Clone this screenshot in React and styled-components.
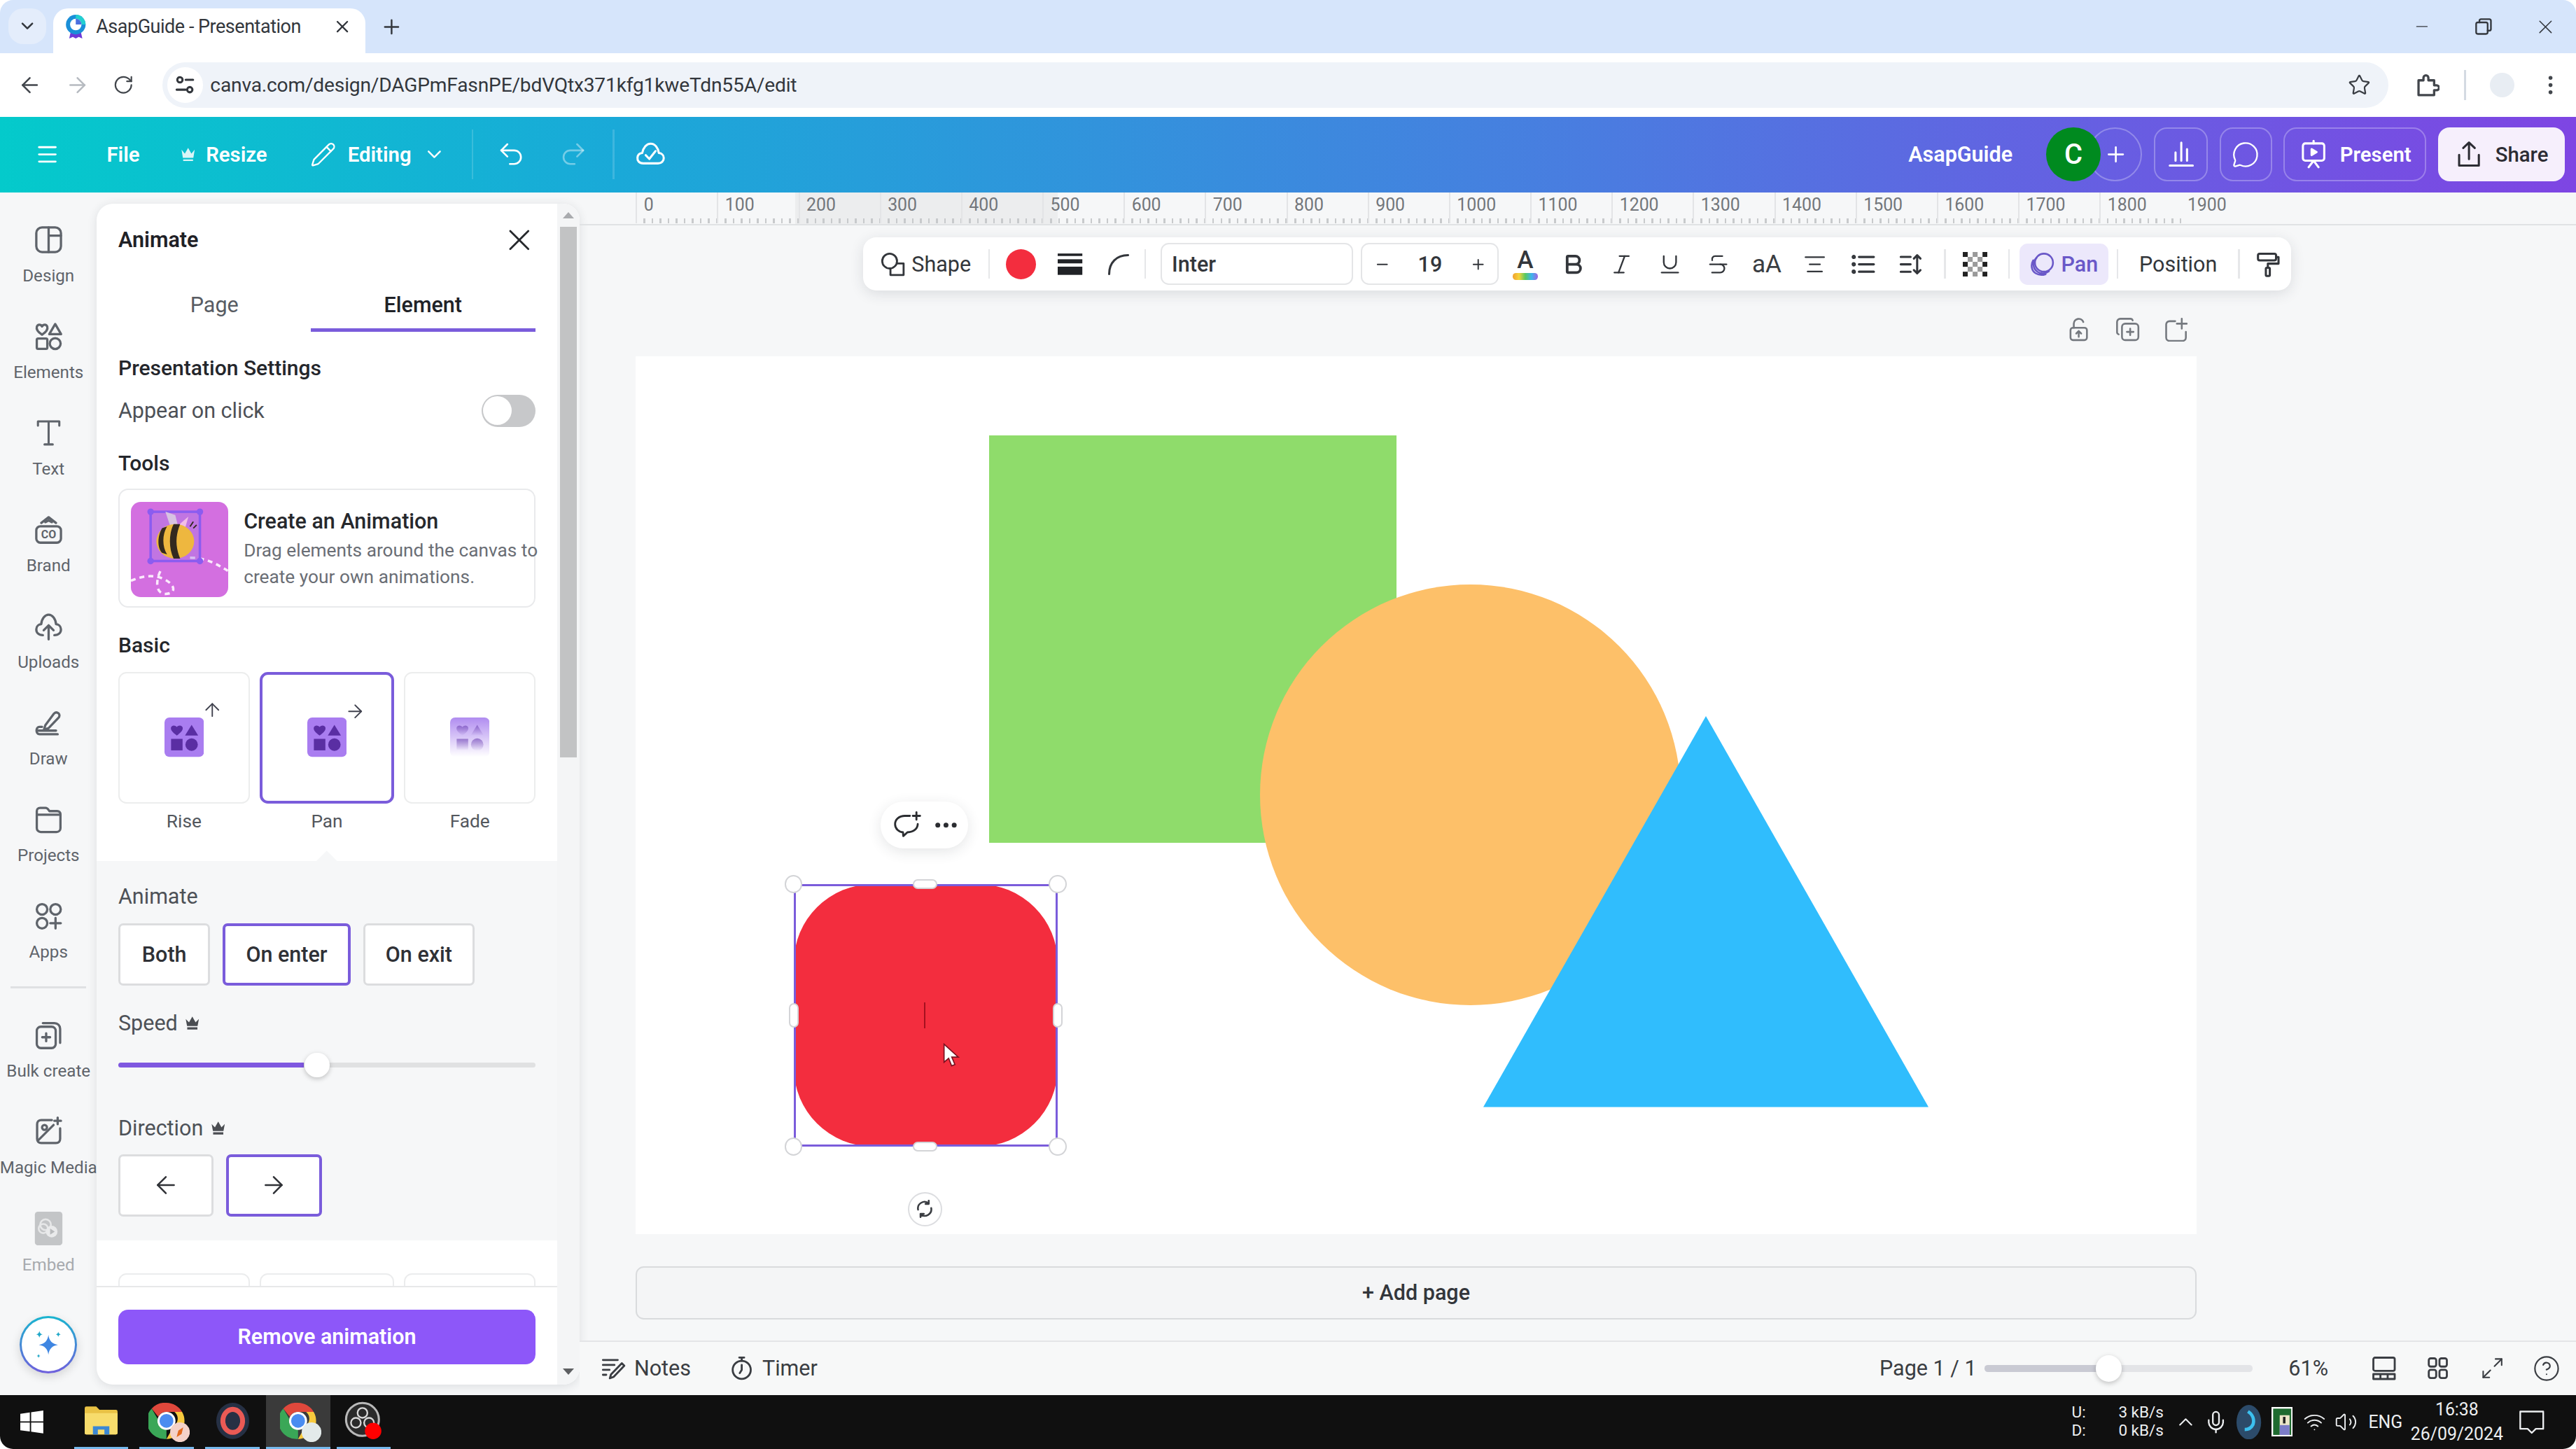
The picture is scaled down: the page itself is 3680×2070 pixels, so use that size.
import React from "react";
import styled, { createGlobalStyle, css } from "styled-components";
import {
  ChevronDown, X, Plus, ArrowLeft, ArrowRight, RotateCw, Star, MoreVertical, Menu, Pencil,
  Undo2, Redo2, MessageCircle, ArrowUp, Minus, Bold, Italic, Underline, Strikethrough,
  AlignCenter, CircleHelp, Maximize2, ChevronUp, Mic, Wifi, Volume2,
} from "lucide-react";

const UI = `Roboto, "Noto Sans", Arial, sans-serif`;
const PURPLE = "#7a5cdb";

const Global = createGlobalStyle`
  html, body { margin: 0; padding: 0; width: 3680px; height: 2070px; overflow: hidden; background: #fff; }
  #root { zoom: 2.34694; width: 1568px; height: 882px; }
  * { box-sizing: border-box; }
`;

const Window = styled.div`
  width: 1568px; height: 882px; display: flex; flex-direction: column;
  border-radius: 8px; overflow: hidden; font-family: ${UI}; color: #26282c;
`;

/* ---------- Chrome ---------- */
const TabStrip = styled.div`
  height: 32.5px; background: #d6e5fb; display: flex; align-items: flex-end; padding-left: 5px; color: #33373d;
`;
const TabSearch = styled.div`
  width: 23px; height: 22px; margin-bottom: 5.5px; border-radius: 9px; background: #e4edfb;
  display: flex; align-items: center; justify-content: center;
`;
const Tab = styled.div`
  width: 190px; height: 27.5px; margin-left: 4.5px; background: #fff; border-radius: 9px 9px 0 0;
  display: flex; align-items: center; padding: 0 8px 5px 7px; font-size: 11.5px; white-space: nowrap;
`;
const TabTitle = styled.span` margin-left: 6px; flex: 1; letter-spacing: -0.2px; `;
const NewTab = styled.div` width: 32px; height: 27.5px; padding-bottom: 5px; display: flex; align-items: center; justify-content: center; `;
const WinControls = styled.div` margin-left: auto; display: flex; align-items: center; height: 32.5px; `;
const WinBtn = styled.div` width: 37.5px; height: 32.5px; display: flex; align-items: center; justify-content: center; `;

const AddressBar = styled.div` height: 38.5px; background: #fff; display: flex; align-items: center; color: #4a4e55; `;
const NavBtn = styled.div`
  width: ${p => p.$w || 29.5}px; display: flex; align-items: center; justify-content: center;
  color: ${p => (p.$dim ? "#b6bac0" : "#42464c")};
`;
const UrlPill = styled.div`
  width: 1355px; height: 27.5px; margin-left: 7px; background: #eff3f9; border-radius: 14px;
  display: flex; align-items: center; position: relative; padding-left: 29px; font-size: 12px; color: #33373d;
  white-space: nowrap; letter-spacing: -0.08px;
`;
const SiteInfo = styled.div`
  position: absolute; left: 3px; top: 3px; width: 21.5px; height: 21.5px; border-radius: 50%; background: #fff;
  display: flex; align-items: center; justify-content: center;
`;
const StarSlot = styled.div` margin-left: auto; margin-right: 11px; display: flex; color: #3a3e44; `;
const ToolSep = styled.div` width: 1px; height: 18px; background: #d4dae2; `;
const ProfileDot = styled.div` width: 15px; height: 15px; border-radius: 50%; background: #e8edf3; `;

/* ---------- Canva header ---------- */
const Header = styled.header`
  height: 46px; display: flex; align-items: center; color: #fff; font-weight: 600; font-size: 12.5px;
  background: linear-gradient(90deg, #04cacb 0%, #1aa9d8 24%, #4a7ce0 62%, #6a5be2 84%, #7e45e3 100%);
`;
const HeadSlot = styled.div`
  width: ${p => p.$w}px; margin-left: ${p => p.$ml || 0}px; height: 100%; flex: none;
  display: flex; align-items: center; justify-content: center; gap: ${p => p.$gap || 0}px;
  color: ${p => (p.$dim ? "rgba(255,255,255,.4)" : "#fff")}; white-space: nowrap;
`;
const HeadSep = styled.div` width: 1px; height: 30px; flex: none; margin-left: ${p => p.$ml}px; background: rgba(255,255,255,.16); `;
const HeadRight = styled.div` margin-left: auto; display: flex; align-items: center; gap: 7px; padding-right: 7px; `;
const TeamName = styled.span` margin-right: 13.5px; font-size: 13px; font-weight: 600; `;
const AvatarGroup = styled.div` display: flex; align-items: center; `;
const Avatar = styled.div`
  position: relative; z-index: 1; width: 33px; height: 33px; border-radius: 50%; background: #008a1f;
  display: flex; align-items: center; justify-content: center; font-size: 17px; font-weight: 500;
`;
const Invite = styled.div`
  width: 33px; height: 33px; margin-left: -7.5px; border-radius: 50%; border: 1px solid rgba(255,255,255,.28);
  display: flex; align-items: center; justify-content: center; padding-left: 1px;
`;
const OutlineBtn = styled.div`
  width: ${p => p.$w}px; height: 33px; border-radius: 8px; border: 1px solid rgba(255,255,255,.28);
  display: flex; align-items: center; justify-content: center; gap: 7px; font-size: 12.5px;
`;
const ShareBtn = styled.div`
  width: 77px; height: 33px; border-radius: 7px; background: #f6effc; color: #2c2c33;
  display: flex; align-items: center; justify-content: center; gap: 7px; font-size: 12.5px; font-weight: 500;
`;

/* ---------- Workspace ---------- */
const Workspace = styled.div` flex: 1; min-height: 0; display: flex; background: #f6f7f8; `;
const Sidebar = styled.nav`
  width: 59px; flex: none; display: flex; flex-direction: column; align-items: center; padding: 19px 0 13px;
`;
const NavGroup = styled.div` display: flex; flex-direction: column; gap: 19.8px; `;
const NavItem = styled.div`
  width: 59px; height: 39px; display: flex; flex-direction: column; align-items: center; gap: 5.5px;
  color: ${p => (p.$dim ? "#a7aaae" : "#5f646b")}; font-size: 10.3px; white-space: nowrap; line-height: 13px;
`;
const SideRule = styled.div` width: 46px; height: 1px; margin: 14px 0 18.6px; background: #dfe1e3; `;
const MagicBtn = styled.div`
  margin-top: auto; width: 35px; height: 35px; border-radius: 50%;
  background: linear-gradient(#fff,#fff) padding-box, linear-gradient(180deg,#19b5cf,#6f5fdc) border-box;
  border: 1.5px solid transparent; box-shadow: 0 2px 6px rgba(0,0,0,.14);
  display: flex; align-items: center; justify-content: center;
`;

const Panel = styled.aside`
  width: 294px; flex: none; margin: 7px 0 6px; background: #fff; display: flex;
  border-radius: 10px; overflow: hidden; box-shadow: 0 1px 6px rgba(40,50,60,.12);
`;
const PanelBody = styled.div` width: 280px; flex: none; display: flex; flex-direction: column; `;
const Scrollbar = styled.div`
  width: 14px; flex: none; background: #f4f5f6; display: flex; flex-direction: column; align-items: center; position: relative;
`;
const ScrollThumb = styled.div` width: 10px; height: 323px; margin-top: 14px; background: #c2c3c4; `;
const ScrollArrow = styled.div`
  position: absolute; ${p => (p.$down ? "bottom: 6px" : "top: 5px")}; left: 3.5px; width: 0; height: 0;
  border-left: 3.5px solid transparent; border-right: 3.5px solid transparent;
  ${p => (p.$down ? "border-top: 4px solid #5d5f62" : "border-bottom: 4px solid #a9abae")};
`;
const Section = styled.div` padding: 0 13px; `;
const PanelHeader = styled.div` height: 44px; display: flex; align-items: center; justify-content: space-between; margin-right: -1px; `;
const PanelTitle = styled.span` font-size: 13px; font-weight: 600; color: #1f2126; `;
const Tabs = styled.div` margin-top: 2px; height: 32px; display: grid; grid-template-columns: 117px 137px; `;
const TabItem = styled.div`
  display: flex; align-items: center; justify-content: center; padding-top: 1px; font-size: 13px;
  color: ${p => (p.$on ? "#202227" : "#585c63")}; font-weight: ${p => (p.$on ? 500 : 400)};
  border-bottom: 2.5px solid ${p => (p.$on ? PURPLE : "transparent")};
`;
const Heading = styled.div`
  margin-top: ${p => p.$mt}px; height: 16px; line-height: 16px; font-size: 12.8px; font-weight: 500; color: #24262b;
`;
const Label = styled.div`
  margin-top: ${p => p.$mt || 0}px; height: 16px; line-height: 16px; font-size: 13px; color: #4d5157;
  display: flex; align-items: center; gap: 4px;
`;
const ToggleRow = styled.div` margin-top: 8px; height: 20px; display: flex; align-items: center; justify-content: space-between; `;
const Toggle = styled.div` width: 33px; height: 19.5px; border-radius: 10px; background: #c7c8ca; padding: 1px; display: flex; `;
const Knob = styled.div` width: 17.5px; height: 17.5px; border-radius: 50%; background: #fff; `;
const ToolCard = styled.div`
  margin-top: 7.5px; height: 72.5px; border: 1px solid #e9eaec; border-radius: 6px; padding: 7px 7px;
  display: flex; gap: 9.5px;
`;
const Thumb = styled.div` width: 59px; height: 58px; flex: none; border-radius: 6px; background: #d36fe0; overflow: hidden; `;
const ToolText = styled.div` display: flex; flex-direction: column; padding-top: 4px; `;
const ToolTitle = styled.div` font-size: 13px; font-weight: 500; line-height: 16px; color: #26282c; `;
const ToolDesc = styled.div` margin-top: 2px; font-size: 11.2px; line-height: 16px; color: #6a6e75; white-space: nowrap; `;
const AnimGrid = styled.div`
  margin-top: ${p => p.$mt}px; display: grid; grid-template-columns: 80px 82px 80px; gap: 6px;
`;
const AnimCard = styled.div`
  height: 80px; border-radius: 5px; position: relative;
  border: ${p => (p.$on ? `2px solid ${PURPLE}` : "1px solid #eceded")};
  display: flex; align-items: center; justify-content: center;
`;
const AnimArrow = styled.div` position: absolute; top: 16px; left: ${p => p.$left}px; color: #40424e; display: flex; `;
const AnimName = styled.div` text-align: center; font-size: 11.2px; line-height: 12px; color: #53575d; `;
const Gray = styled.div`
  position: relative; height: 231px; margin-top: 18px; padding: 14px 13px 0; background: #f6f7f8;
  &::before { content: ""; position: absolute; top: -4px; left: 135px; width: 10px; height: 10px; background: #f6f7f8; transform: rotate(45deg); }
`;
const PillRow = styled.div` position: relative; margin-top: ${p => p.$mt}px; display: flex; gap: ${p => p.$gap}px; `;
const Choice = styled.div`
  width: ${p => p.$w}px; height: 38px; border-radius: 3px; background: #fff;
  border: ${p => (p.$on ? `2px solid ${PURPLE}` : "1.5px solid #dcdddf")};
  display: flex; align-items: center; justify-content: center; font-size: 13px; font-weight: 500; color: #2f3136;
`;
const Slider = styled.div` position: relative; margin-top: 9.4px; height: 16px; display: flex; align-items: center; `;
const SliderTrack = styled.div`
  width: 100%; height: 3px; border-radius: 2px;
  background: linear-gradient(90deg, #7f58e0 0 44.5%, #e0e1e2 44.5% 100%);
`;
const SliderKnob = styled.div`
  position: absolute; left: 113.5px; top: .5px; width: 15px; height: 15px; border-radius: 50%; background: #fff;
  box-shadow: 0 1px 3px rgba(0,0,0,.22);
`;
const Peek = styled.div` height: 28px; padding: 20px 13px 0; display: grid; grid-template-columns: 80px 82px 80px; gap: 6px; `;
const PeekCard = styled.div` border: 1px solid #ebeced; border-bottom: 0; border-radius: 5px 5px 0 0; `;
const Footer = styled.div` flex: 1; border-top: 1px solid #e7e8e9; padding: 13.5px 13px 0; `;
const RemoveBtn = styled.div`
  height: 33px; border-radius: 6px; background: #8d57f9; color: #fff; font-size: 13px; font-weight: 600;
  display: flex; align-items: center; justify-content: center;
`;

/* ---------- Main ---------- */
const Main = styled.main` flex: 1; min-width: 0; display: flex; flex-direction: column; `;
const Ruler = styled.div` position: relative; height: 20px; flex: none; padding-left: 34px; display: flex; border-bottom: 1px solid #e0e2e4; `;
const RulerMark = styled.div` position: absolute; left: 131px; top: 0; bottom: 0; width: 160px; background: #ecedee; `;
const RulerCell = styled.div`
  position: relative; width: 49.5px; flex: none; height: 19px; padding-left: 4px; line-height: 15px; font-size: 10.6px; color: #72767b;
  ${p => !p.$last && css`
    border-left: 1px solid #e3e4e6;
    &::after {
      content: ""; position: absolute; left: 0; right: 0; bottom: 0; height: 3px;
      background: repeating-linear-gradient(90deg, transparent 0 4px, #c8cacc 4px 4.9px);
    }
  `}
`;
const Stage = styled.div` flex: 1; min-height: 0; display: flex; flex-direction: column; `;
const ToolbarSlot = styled.div` margin-top: 7.6px; display: flex; justify-content: center; margin-left: -1px; `;
const Toolbar = styled.div`
  width: 869px; height: 32.4px; flex: none; padding-left: 8px; background: #fff; border-radius: 8px;
  display: flex; align-items: center; box-shadow: 0 2px 8px rgba(40,50,60,.13); font-size: 13px; color: #33363b;
`;
const ToolSlot = styled.div`
  width: ${p => p.$w}px; margin-left: ${p => p.$ml || 0}px; height: 24px; flex: none; border-radius: 5px;
  display: flex; align-items: center; justify-content: center; gap: ${p => p.$gap || 0}px; white-space: nowrap;
`;
const BarSep = styled.div` width: 1px; height: 18px; flex: none; background: #e6e7e9; margin: 0 ${p => p.$r}px 0 ${p => p.$l}px; `;
const Swatch = styled.div` width: 18.5px; height: 18.5px; border-radius: 50%; background: #f32d3e; `;
const FontBox = styled.div`
  width: 117px; height: 25.5px; flex: none; border: 1px solid #e4e5e7; border-radius: 5px;
  display: flex; align-items: center; padding-left: 6px; font-weight: 500;
`;
const SizeBox = styled.div`
  width: 84px; height: 25.5px; flex: none; margin-left: 5px; border: 1px solid #e4e5e7; border-radius: 5px;
  display: flex; align-items: center; justify-content: space-between; padding: 0 7px; font-weight: 500;
`;
const TextColor = styled.div` display: flex; flex-direction: column; align-items: center; font-size: 15px; font-weight: 500; line-height: 14px; `;
const Rainbow = styled.div` width: 15px; height: 4px; margin-top: 1px; border-radius: 2px; background: linear-gradient(90deg,#f0a030,#f5d33a,#57c85f,#3cb4ef,#a064e0); `;
const AaText = styled.span` font-size: 15px; color: #3a3d42; `;
const PanChip = styled(ToolSlot)` height: 25px; background: #ece8fb; color: #6a58c8; font-weight: 500; `;
const PageColumn = styled.div` width: 950px; margin-left: 34px; display: flex; flex-direction: column; `;
const PageActions = styled.div` height: 40px; padding: 16px 5px 0 0; display: flex; justify-content: flex-end; gap: 14.5px; color: #75797f; align-items: flex-start; `;
const Canvas = styled.div` position: relative; height: 534px; background: #fff; `;
const GreenSquare = styled.div` position: absolute; left: 215px; top: 48px; width: 248px; height: 248px; background: #8fdc6b; `;
const OrangeCircle = styled.div` position: absolute; left: 380px; top: 139px; width: 256px; height: 256px; border-radius: 50%; background: #fdc069; `;
const Triangle = styled.svg` position: absolute; left: 516px; top: 219px; `;
const Selection = styled.div` position: absolute; left: 96px; top: 321px; width: 161px; height: 160px; `;
const RedShape = styled.div` position: absolute; inset: 0; background: #f32d3e; border-radius: 30%; `;
const SelectFrame = styled.div` position: absolute; inset: 0; border: 1.6px solid ${PURPLE}; `;
const handle = {
  tl: "left:-5.5px;top:-5.5px;width:11px;height:11px;border-radius:50%;",
  tr: "right:-5.5px;top:-5.5px;width:11px;height:11px;border-radius:50%;",
  bl: "left:-5.5px;bottom:-5.5px;width:11px;height:11px;border-radius:50%;",
  br: "right:-5.5px;bottom:-5.5px;width:11px;height:11px;border-radius:50%;",
  t: "left:72.5px;top:-3px;width:15px;height:6px;border-radius:3px;",
  b: "left:72.5px;bottom:-3px;width:15px;height:6px;border-radius:3px;",
  l: "left:-3px;top:72.5px;width:6px;height:15px;border-radius:3px;",
  r: "right:-3px;top:72.5px;width:6px;height:15px;border-radius:3px;",
};
const Handle = styled.div` position: absolute; background: #fff; border: 1px solid #d3d4d7; ${p => handle[p.$at]} `;
const Caret = styled.div` position: absolute; left: 79.5px; top: 72px; width: 1px; height: 16px; background: #a5101f; `;
const Cursor = styled.svg` position: absolute; left: 91px; top: 97px; `;
const FloatPill = styled.div`
  position: absolute; left: 149px; top: 271px; width: 53.5px; height: 28.5px; border-radius: 14px; background: #fff;
  box-shadow: 0 2px 8px rgba(40,50,60,.12); display: flex; align-items: center; justify-content: center; gap: 8px; color: #2b2d31;
`;
const RotateBtn = styled.div`
  position: absolute; left: 165.5px; top: 508.5px; width: 21px; height: 21px; border-radius: 50%; background: #fff; border: 1px solid #dcdde0;
  display: flex; align-items: center; justify-content: center; color: #3a3d42;
`;
const AddPage = styled.div`
  margin-top: 20px; height: 32px; border: 1px solid #d9dbdd; border-radius: 5px; background: #f4f5f6;
  display: flex; align-items: center; justify-content: center; font-size: 13px; font-weight: 500; color: #33363b;
`;
const BottomBar = styled.div`
  height: 33px; flex: none; border-top: 1px solid #e4e5e7; display: flex; align-items: center; padding: 0 1.5px 0 13px;
  font-size: 13px; color: #3a3d42; background: #f7f8f8;
`;
const BarItem = styled.div` width: ${p => p.$w}px; display: flex; align-items: center; gap: 5px; white-space: nowrap; `;
const BarRight = styled.div` margin-left: auto; display: flex; align-items: center; `;
const PageLabel = styled.span` width: 51px; white-space: nowrap; `;
const ZoomTrack = styled.div`
  position: relative; width: 163px; height: 4px; margin-left: 13px; border-radius: 2px;
  background: linear-gradient(90deg, #c9cad3 0 46%, #e3e4e7 46% 100%);
`;
const ZoomKnob = styled.div`
  position: absolute; left: 67.5px; top: -6px; width: 16px; height: 16px; border-radius: 50%; background: #fff;
  box-shadow: 0 1px 3px rgba(0,0,0,.22);
`;
const Percent = styled.span` width: 24px; margin-left: 22px; white-space: nowrap; `;
const BarIcon = styled.div` width: 33px; display: flex; justify-content: center; margin-left: ${p => p.$ml || 0}px; `;

/* ---------- Taskbar ---------- */
const Taskbar = styled.footer`
  height: 33px; flex: none; background: #101010; display: flex; align-items: stretch; color: #eceef0; font-size: 10.6px;
`;
const TaskSlot = styled.div`
  width: ${p => p.$w || 33}px; margin-left: ${p => p.$ml || 0}px; flex: none; display: flex; align-items: center; justify-content: center;
  background: ${p => (p.$on ? "#3a3a3a" : "transparent")};
  border-bottom: ${p => (p.$plain ? "0" : "1.5px solid #76b9ed")};
`;
const Tray = styled.div` margin-left: auto; display: flex; align-items: center; padding-right: 10px; `;
const Net = styled.div`
  width: 56px; display: grid; grid-template-columns: 1fr auto; column-gap: 4px; font-size: 9.6px; line-height: 11px; white-space: nowrap;
`;
const TraySlot = styled.div`
  width: ${p => p.$w}px; margin-left: ${p => p.$ml || 0}px; flex: none; display: flex; flex-direction: column; align-items: center; justify-content: center;
  white-space: nowrap; line-height: 15px;
`;
const LogoBox = styled.div` position: relative; width: 22px; height: 22px; `;
const LogoBadge = styled.svg` position: absolute; right: -3px; bottom: -2px; `;

/* ---------- Drawn icons ---------- */
const Svg = ({ s = 20, w, h, sw = 1.4, vb = 20, children }) => (
  <svg width={w || s} height={h || s} viewBox={`0 0 ${vb} ${vb}`} fill="none" stroke="currentColor"
    strokeWidth={sw} strokeLinecap="round" strokeLinejoin="round">{children}</svg>
);
const DesignIcon = () => <Svg><rect x="2.5" y="2.5" width="15" height="15" rx="3.5" /><path d="M10 2.5v15M10 7.5h7.5" /></Svg>;
const ElementsIcon = () => (
  <Svg>
    <path d="M6 9C3 7 2.4 5.6 2.8 4.2 3.4 2.6 5.2 2.6 6 4c.8-1.4 2.6-1.4 3.2.2C9.6 5.6 9 7 6 9z" />
    <path d="M14 2.5l3.6 6.2h-7.2z" /><rect x="2.8" y="11.3" width="6.4" height="6.3" rx=".8" /><circle cx="14" cy="14.4" r="3.3" />
  </Svg>
);
const TextIcon = () => <Svg sw={1.3}><path d="M3.5 5.5V3h13v2.500M10 3v14M7.5 17h5" /></Svg>;
const BrandIcon = () => (
  <Svg>
    <rect x="2.5" y="8" width="15" height="10" rx="2.5" />
    <path d="M5.5 6L10 2.500 14.500 6M8 5.500l2-1 2 1" />
    <text x="10" y="15.5" textAnchor="middle" fontSize="6.8" fontWeight="700" fontFamily="Roboto" stroke="none" fill="currentColor">CO</text>
  </Svg>
);
const UploadsIcon = () => <Svg><path d="M6.5 15.5C3.800 15.500 2.400 13.800 2.500 11.900 2.600 10 4 8.900 5.500 8.800 5.700 5.500 7.800 3 10 3s4.300 2.500 4.500 5.800c1.500.1 2.900 1.200 3 3.100.1 1.900-1.300 3.600-4 3.600" /><path d="M10 18v-8M7 12.500L10 9.500l3 3" /></Svg>;
const DrawIcon = () => <Svg><path d="M8 11.500l-.8 2.600 2.700-.7 6-6.300c.9-.9.900-2.100.1-2.800-.8-.7-1.900-.7-2.700.1z" /><path d="M6 12.500H4.500c-2.500 0-2.500 4.500 0 4.500h11" /><path d="M3.500 14.800h11" /></Svg>;
const ProjectsIcon = () => <Svg><path d="M2.800 7V5c0-1.200.8-2 2-2h3.400c.8 0 1.300.6 1.800 1.300l.5.700h4.700c1.200 0 2 .8 2 2v8.300c0 1.400-1 2.400-2.400 2.400H5.200c-1.400 0-2.400-1-2.400-2.400z" /><path d="M2.800 7.200h14.400" /></Svg>;
const AppsIcon = () => <Svg><circle cx="6" cy="6" r="3.2" /><circle cx="14.200" cy="6" r="3.2" /><circle cx="6" cy="14.400" r="3.2" /><path d="M14.200 11.200v6.400M11 14.400h6.400" /></Svg>;
const BulkIcon = () => <Svg><rect x="2.8" y="5" width="11.5" height="13" rx="2.5" /><path d="M6.500 2.800h7c2 0 3.500 1.500 3.500 3.500v8.500M8.500 9v4.800M6.100 11.400h4.800" /></Svg>;
const MagicIcon = () => <Svg><path d="M12 3H5.500C4 3 3 4 3 5.500v9C3 16 4 17 5.500 17h9c1.500 0 2.500-1 2.500-2.500V8" /><circle cx="7.5" cy="7.5" r="1.5" /><path d="M3.500 15.500L13 6" /><path d="M15.500 1.500v4M13.500 3.500h4" /></Svg>;
const EmbedIcon = () => (
  <svg width="20" height="22" viewBox="0 0 20 22">
    <rect x="1" y="0" width="18" height="22" rx="2" fill="#c3c5c7" />
    <circle cx="8" cy="8.5" r="3.5" fill="none" stroke="#e6e7e8" strokeWidth="1.2" />
    <circle cx="6.5" cy="11" r="3" fill="none" stroke="#e6e7e8" strokeWidth="1.2" />
    <circle cx="12" cy="13" r="3.8" fill="#e9eaeb" /><path d="M11 11l3 2-3 2z" fill="#b8babc" />
  </svg>
);
const SparkleIcon = () => (
  <svg width="24" height="24" viewBox="0 0 24 24" fill="#3f86e2">
    <path d="M12 6c.5 3.600 2.200 5.400 5.800 6-3.600.6-5.300 2.400-5.800 6-.5-3.600-2.200-5.400-5.800-6 3.600-.6 5.300-2.400 5.800-6z" />
    <path d="M6.500 3.500c.2 1.300.8 1.900 2 2.100-1.200.2-1.800.8-2 2.100-.2-1.300-.8-1.900-2-2.100 1.200-.2 1.800-.8 2-2.100z" fill="#21a7c8" />
    <path d="M18 4c.2 1 .6 1.400 1.500 1.600-.9.2-1.300.6-1.500 1.600-.2-1-.6-1.400-1.500-1.600.9-.2 1.300-.6 1.500-1.600z" fill="#21a7c8" />
    <path d="M6 17.500c.1.800.5 1.200 1.200 1.300-.7.100-1.100.5-1.200 1.300-.1-.8-.5-1.200-1.200-1.300.7-.1 1.100-.5 1.200-1.300z" fill="#21a7c8" />
  </svg>
);
const Crown = () => (
  <svg width="10" height="10" viewBox="0 0 10 10" fill="#4a4d52"><path d="M1 2.500l2 2L5 1l2 3.500 2-2-.8 4.200H1.800zM1.900 7.500h6.200v1.300H1.900z" /></svg>
);
const ShapesTile = ({ fade }) => (
  <svg width="24" height="24" viewBox="0 0 24 24">
    <defs>
      <linearGradient id="fadeBg" x1="0" y1="0" x2="0" y2="1"><stop offset="0" stopColor="#b08cf0" /><stop offset="1" stopColor="#b08cf0" stopOpacity="0" /></linearGradient>
      <linearGradient id="fadeIn" x1="0" y1="0" x2="0" y2="1"><stop offset="0" stopColor="#6a3fb0" stopOpacity=".6" /><stop offset="1" stopColor="#6a3fb0" stopOpacity="0" /></linearGradient>
    </defs>
    <rect width="24" height="24" rx="3" fill={fade ? "url(#fadeBg)" : "#a97df0"} />
    <g fill={fade ? "url(#fadeIn)" : "#5a2ea3"}>
      <path d="M7.500 11C4.500 8.800 3.600 7.500 4 6c.5-1.500 2.500-1.500 3.500-.2C8.500 4.500 10.500 4.500 11 6c.4 1.500-.5 2.800-3.500 5z" />
      <path d="M16.500 4.500L20.500 11h-8z" /><rect x="4" y="13" width="7" height="7" /><circle cx="16.5" cy="16.5" r="3.8" />
    </g>
  </svg>
);
const BeeThumb = () => (
  <svg width="59" height="58" viewBox="0 0 59 58">
    <path d="M0 48c7-3 14-4 20-1 7 3 8 9 1 9-6 0-6-8-3-14" fill="none" stroke="#fbeafc" strokeWidth="1.5" strokeDasharray="3 2.5" />
    <path d="M36 34c9 0 15 3 23 8" fill="none" stroke="#fbeafc" strokeWidth="1.5" strokeDasharray="3 2.5" />
    <rect x="12" y="6" width="30" height="30" fill="#a780e6" fillOpacity=".4" stroke="#8b5cf0" strokeWidth="1.5" />
    {[[12, 6], [42, 6], [12, 36], [42, 36]].map(([x, y]) => <circle key={x + "-" + y} cx={x} cy={y} r="2" fill="#8b5cf0" />)}
    <path d="M24 15l-3-9 6 2 2 8z" fill="#d7c2e2" /><path d="M28 15l7-6-2 7z" fill="#f2bde6" />
    <ellipse cx="27" cy="24" rx="11.5" ry="10.5" fill="#eeb73f" />
    <path d="M19 16c-3 5-3 12 0 15l3 1c-3-5-3-12 0-17zM26 13.500c-3 6-3 15 0 21l4 0c-3-7-3-14 0-21z" fill="#33291f" />
    <path d="M36 15l2-3M38 16l2-2" stroke="#33291f" strokeWidth=".8" />
  </svg>
);
const Favicon = () => (
  <svg width="13" height="15" viewBox="0 0 13 15">
    <path d="M3.500 10l-1 4.500 2.200-1 1.800 1 1.800-1 2.200 1-1-4.500z" fill="#6d39d8" />
    <circle cx="6.5" cy="6" r="6" fill="#1a8fd8" /><path d="M6.500 0a6 6 0 016 6H6.500z" fill="#22d0d0" />
    <circle cx="6.5" cy="6" r="3.5" fill="#fff" /><path d="M6.500 2.500a3.500 3.500 0 013.500 3.500H6.500z" fill="#4b6fe0" />
  </svg>
);
const TuneIcon = () => <Svg s={12} sw={1.3} vb={12}><circle cx="3" cy="3" r="1.6" /><path d="M6.500 3H11M1 9h5.500" /><circle cx="9" cy="9" r="1.6" /></Svg>;
const Restore = () => <Svg s={11} sw={1} vb={11}><rect x="1" y="3" width="7" height="7" rx="1" /><path d="M3 3V2a1 1 0 011-1h5a1 1 0 011 1v5a1 1 0 01-1 1H8" /></Svg>;
const Puzzle = () => <Svg s={16} sw={1.4} vb={16}><path d="M3 5h3V3.500a1.500 1.500 0 013 0V5h3.500v3H14a1.500 1.500 0 010 3h-1.500v3H3z" /></Svg>;
const Crown2 = () => (
  <svg width="10" height="10" viewBox="0 0 10 10" fill="#fff" opacity=".85"><path d="M1 2l2 2.500L5 1l2 3.500L9 2l-.8 5H1.800zM2 8h6v1H2z" /></svg>
);
const CloudOk = () => <Svg s={20} sw={1.3}><path d="M5.500 15.500C3 15.500 1.800 13.800 2 12c.2-1.700 1.400-2.700 2.900-2.800C5.500 6 7.500 3.500 10 3.500c2.600 0 4.500 2.500 5 5.700 1.700.2 3 1.300 3 3 0 1.800-1.300 3.300-3.500 3.300z" /><path d="M7 10.500l2.200 2.300L13 8" /></Svg>;
const BarsIcon = () => <Svg s={18} sw={1.3} vb={18}><path d="M2 16h14M5.500 13V8M9 13V2M12.500 13V6" /></Svg>;
const PresentIcon = () => <Svg s={18} sw={1.3} vb={18}><path d="M9 1v1.500" /><rect x="2.5" y="2.5" width="13" height="10.5" rx="1.5" /><path d="M7.800 6l3 1.800-3 1.800z" fill="currentColor" /><path d="M9 13l-3 4M9 13l3 4" /></Svg>;
const ShareIcon = () => <Svg s={18} sw={1.3} vb={18}><path d="M3 9.500V16h12V9.500M9 12V2M5.500 5.300L9 2l3.500 3.300" /></Svg>;
const ShapeIcon = () => <Svg s={15} sw={1.2} vb={15}><circle cx="5.5" cy="5.5" r="4.5" /><path d="M10 7h4v7H6v-3.500" /></Svg>;
const StrokeLines = () => (
  <svg width="15" height="14" viewBox="0 0 15 14" fill="#202226"><rect x="0" y="0.5" width="15" height="1.5" /><rect x="0" y="4" width="15" height="2.5" /><rect x="0" y="8.5" width="15" height="5" /></svg>
);
const CornerIcon = () => <Svg s={14} sw={1.3} vb={14}><path d="M1.500 13C1.500 6 6 1.500 13 1.500" /></Svg>;
const ListBars = () => <Svg s={15} sw={1.4} vb={15}><path d="M5 3h9M5 7.500h9M5 12h9" /><circle cx="1.8" cy="3" r=".6" /><circle cx="1.8" cy="7.5" r=".6" /><circle cx="1.8" cy="12" r=".6" /></Svg>;
const SpacingIcon = () => <Svg s={15} sw={1.3} vb={15}><path d="M1 3h6M1 7.500h6M1 12h6M11 2v11M9 4l2-2 2 2M9 11l2 2 2-2" /></Svg>;
const Checker = () => (
  <svg width="15" height="15" viewBox="0 0 15 15">
    {[0, 1, 2, 3, 4].flatMap(r => [0, 1, 2, 3, 4].map(c => (r + c) % 2 === 0
      ? <rect key={r + "." + c} x={c * 3} y={r * 3} width="3" height="3" fill={c % 4 === 0 ? "#222" : "#9a9a9a"} /> : null))}
  </svg>
);
const PanIcon = () => <Svg s={15} sw={1.1} vb={15}><circle cx="8.5" cy="6.5" r="5.5" /><path d="M4 3.500C1.500 6 1.500 10 4.500 12c2 1.500 5 1.300 7-.3M2 5c-1.800 3-1 6.500 1.500 8 2 1.200 4 1.200 6 .5" /></Svg>;
const Roller = () => <Svg s={16} sw={1.3} vb={16}><rect x="2" y="1.5" width="11" height="4" rx="1" /><path d="M13 3.500h1.500v4H8v2.500" /><rect x="6.8" y="10" width="2.4" height="5" rx=".6" /></Svg>;
const Lock = () => <Svg s={15} sw={1.1} vb={15}><rect x="2.5" y="6.5" width="10" height="7.5" rx="1.5" /><path d="M4.500 6.500V4a3 3 0 015.800-1M7.500 12V9M6 10l1.500-1.500L9 10" /></Svg>;
const CopyAdd = () => <Svg s={15} sw={1.1} vb={15}><rect x="4" y="4" width="10" height="10" rx="2" /><path d="M2 10.500A1.500 1.500 0 011 9V3a2 2 0 012-2h6a1.500 1.500 0 011.500 1M9 7v4M7 9h4" /></Svg>;
const PageAdd = () => <Svg s={15} sw={1.1} vb={15}><path d="M7 2.500H3.500a2 2 0 00-2 2v8a2 2 0 002 2h8a2 2 0 002-2V9M11 1v6M8 4h6" /></Svg>;
const CommentPlus = () => <Svg s={18} sw={1.2} vb={18}><path d="M11 3.200H8C4.500 3.200 2 5.300 2 8.300c0 2.800 2.300 4.700 4.800 4.900L7 15.500l2.500-2.300c3.600-.1 6.200-2 6.300-5" /><path d="M15 1v4.500M12.800 3.200h4.400" /></Svg>;
const NotesIcon = () => <Svg s={15} sw={1.2} vb={15}><path d="M1 2.500h9M1 5.500h7M1 8.500h4M1 11.500h2M12.500 4.500l1.500 1.500-6.500 6.800-2.300.8.700-2.300z" /></Svg>;
const TimerIcon = () => <Svg s={15} sw={1.2} vb={15}><path d="M6 1h3M7.500 1v2" /><circle cx="7.5" cy="8.5" r="5.5" /><path d="M7.500 5.500v3l-1.200 2" /></Svg>;
const LayoutIcon = () => <Svg s={16} sw={1.2} vb={16}><rect x="1.5" y="1.5" width="13" height="8" rx="1" /><path d="M1.500 11.500h13v3h-13zM5.800 11.500v3M10.200 11.500v3" /></Svg>;
const GridIcon = () => <Svg s={15} sw={1.2} vb={15}><rect x="2" y="1.5" width="4.5" height="5" rx="1.2" /><rect x="8.5" y="1.5" width="4.5" height="5" rx="1.2" /><rect x="2" y="8.5" width="4.5" height="5" rx="1.2" /><rect x="8.5" y="8.5" width="4.5" height="5" rx="1.2" /></Svg>;
const SwapIcon = () => <Svg s={11} sw={1.1} vb={11}><path d="M1.500 6A4 4 0 018 2.200M9.500 5a4 4 0 01-6.500 3.800M8 .5v2H6M3 10.500v-2h2" /></Svg>;
const Dots = () => (
  <svg width="14" height="4" viewBox="0 0 14 4" fill="currentColor"><circle cx="2" cy="2" r="1.5" /><circle cx="7" cy="2" r="1.5" /><circle cx="12" cy="2" r="1.5" /></svg>
);
const Win = () => (
  <svg width="14" height="14" viewBox="0 0 14 14" fill="#fff"><path d="M0 2l5.800-.8v5.400H0zM6.600 1.100L14 0v6.600H6.600zM0 7.400h5.800v5.400L0 12zM6.600 7.400H14V14l-7.400-1.100z" /></svg>
);
const Explorer = () => (
  <svg width="20" height="19" viewBox="0 0 20 19">
    <path d="M0 2a1 1 0 011-1h6l2 2h10a1 1 0 011 1v13a1 1 0 01-1 1H1a1 1 0 01-1-1z" fill="#e9c244" />
    <path d="M0 5h20v12a1 1 0 01-1 1H1a1 1 0 01-1-1z" fill="#f7dc6c" /><path d="M5 13h10v5h-3v-3H8v3H5z" fill="#3a87d4" />
  </svg>
);
const ChromeLogo = ({ badge }) => (
  <LogoBox>
    <svg width="22" height="22" viewBox="0 0 22 22">
      <path d="M11 0a11 11 0 019.500 5.500H11a5.500 5.500 0 00-5 3L2 3.500A11 11 0 0111 0z" fill="#e0483c" />
      <path d="M20.500 5.500A11 11 0 0111 22l4.500-7.800a5.500 5.500 0 00.4-8.700z" fill="#f7c93d" />
      <path d="M2 3.500l4.500 7.800a5.500 5.500 0 004.500 5.200L11 22A11 11 0 012 3.500z" fill="#3aa757" />
      <circle cx="11" cy="11" r="5.5" fill="#fff" /><circle cx="11" cy="11" r="4.2" fill="#4a8cf0" />
    </svg>
    <LogoBadge width="12" height="12" viewBox="0 0 12 12">
      <circle cx="6" cy="6" r="6" fill={badge ? "#f4d2c8" : "#e3eaea"} />
      {badge && <path d="M4 9l1-4 3-2-1 4z" fill="#e36a1e" />}
    </LogoBadge>
  </LogoBox>
);
const RingLogo = () => (
  <svg width="20" height="22" viewBox="0 0 20 22"><ellipse cx="10" cy="11" rx="10" ry="11" fill="#263044" /><ellipse cx="10" cy="11" rx="6" ry="7" fill="none" stroke="#ea5a55" strokeWidth="3" /></svg>
);
const ObsLogo = () => (
  <svg width="24" height="24" viewBox="0 0 24 24">
    <circle cx="11" cy="11" r="10" fill="#2a2a2a" stroke="#b9b9b9" strokeWidth="1.3" />
    <circle cx="11" cy="7" r="3" fill="none" stroke="#d8d8d8" /><circle cx="7" cy="13" r="3" fill="none" stroke="#d8d8d8" /><circle cx="15" cy="13" r="3" fill="none" stroke="#d8d8d8" />
    <circle cx="17.5" cy="18" r="5" fill="#f00" />
  </svg>
);
const TrayFlag = () => (
  <svg width="13" height="18" viewBox="0 0 13 18"><rect width="13" height="18" fill="#fff" /><rect x="1" y="1" width="11" height="16" fill="#1e6a2f" /><rect x="5" y="5" width="6" height="12" fill="#ece6c8" /><rect x="7" y="6" width="1.5" height="4" fill="#222" /><rect x="5" y="11" width="6" height="6" fill="#7c7cc8" /></svg>
);
const BlueApp = () => (
  <svg width="15" height="21" viewBox="0 0 15 21"><ellipse cx="7.5" cy="10.5" rx="7.5" ry="10.5" fill="#2c4b6a" /><path d="M7 4c3 2 4 5 3 8-1 2-3 3-5 3" fill="none" stroke="#3cc0ef" strokeWidth="2" /></svg>
);
const Notify = () => <Svg s={16} sw={1} vb={16}><path d="M1 1.500h14V12h-4.500L8 14.500 5.500 12H1z" /></Svg>;

const navTop = [
  ["Design", DesignIcon], ["Elements", ElementsIcon], ["Text", TextIcon], ["Brand", BrandIcon],
  ["Uploads", UploadsIcon], ["Draw", DrawIcon], ["Projects", ProjectsIcon], ["Apps", AppsIcon],
];
const rulerMarks = Array.from({ length: 20 }, (_, i) => i * 100);
const handles = ["tl", "tr", "bl", "br", "t", "b", "l", "r"];

export default function App() {
  return (
    <>
      <Global />
      <Window>
        <TabStrip>
          <TabSearch><ChevronDown size={12} strokeWidth={2.2} /></TabSearch>
          <Tab>
            <Favicon />
            <TabTitle>AsapGuide - Presentation</TabTitle>
            <X size={12} strokeWidth={2} />
          </Tab>
          <NewTab><Plus size={14} strokeWidth={1.8} /></NewTab>
          <WinControls>
            <WinBtn><Minus size={11} strokeWidth={1.2} /></WinBtn>
            <WinBtn><Restore /></WinBtn>
            <WinBtn><X size={14} strokeWidth={1.1} /></WinBtn>
          </WinControls>
        </TabStrip>

        <AddressBar>
          <NavBtn $w={36}><ArrowLeft size={15} strokeWidth={1.7} /></NavBtn>
          <NavBtn $w={22} $dim><ArrowRight size={15} strokeWidth={1.7} /></NavBtn>
          <NavBtn $w={34}><RotateCw size={13} strokeWidth={1.7} /></NavBtn>
          <UrlPill>
            <SiteInfo><TuneIcon /></SiteInfo>
            canva.com/design/DAGPmFasnPE/bdVQtx371kfg1kweTdn55A/edit
            <StarSlot><Star size={14} strokeWidth={1.6} /></StarSlot>
          </UrlPill>
          <NavBtn $w={46}><Puzzle /></NavBtn>
          <ToolSep />
          <NavBtn $w={44}><ProfileDot /></NavBtn>
          <NavBtn $w={15}><MoreVertical size={15} strokeWidth={1.8} /></NavBtn>
        </AddressBar>

        <Header>
          <HeadSlot $w={58}><Menu size={15} strokeWidth={2} /></HeadSlot>
          <HeadSlot $w={34}>File</HeadSlot>
          <HeadSlot $w={60} $ml={14} $gap={6}><Crown2 />Resize</HeadSlot>
          <HeadSlot $w={88} $ml={20} $gap={7}><Pencil size={16} strokeWidth={1.5} />Editing<ChevronDown size={14} strokeWidth={1.8} /></HeadSlot>
          <HeadSep $ml={13} />
          <HeadSlot $w={46}><Undo2 size={18} strokeWidth={1.5} /></HeadSlot>
          <HeadSlot $w={30} $dim><Redo2 size={18} strokeWidth={1.5} /></HeadSlot>
          <HeadSep $ml={9} />
          <HeadSlot $w={44}><CloudOk /></HeadSlot>
          <HeadRight>
            <TeamName>AsapGuide</TeamName>
            <AvatarGroup>
              <Avatar>C</Avatar>
              <Invite><Plus size={15} strokeWidth={1.8} /></Invite>
            </AvatarGroup>
            <OutlineBtn $w={33}><BarsIcon /></OutlineBtn>
            <OutlineBtn $w={32}><MessageCircle size={17} strokeWidth={1.4} /></OutlineBtn>
            <OutlineBtn $w={87}><PresentIcon />Present</OutlineBtn>
            <ShareBtn><ShareIcon />Share</ShareBtn>
          </HeadRight>
        </Header>

        <Workspace>
          <Sidebar>
            <NavGroup>
              {navTop.map(([name, Icon]) => <NavItem key={name}><Icon />{name}</NavItem>)}
            </NavGroup>
            <SideRule />
            <NavGroup>
              <NavItem><BulkIcon />Bulk create</NavItem>
              <NavItem><MagicIcon />Magic Media</NavItem>
              <NavItem $dim><EmbedIcon />Embed</NavItem>
            </NavGroup>
            <MagicBtn><SparkleIcon /></MagicBtn>
          </Sidebar>

          <Panel>
            <PanelBody>
              <Section>
                <PanelHeader>
                  <PanelTitle>Animate</PanelTitle>
                  <X size={22} strokeWidth={1.3} />
                </PanelHeader>
                <Tabs>
                  <TabItem>Page</TabItem>
                  <TabItem $on>Element</TabItem>
                </Tabs>
                <Heading $mt={14}>Presentation Settings</Heading>
                <ToggleRow>
                  <Label>Appear on click</Label>
                  <Toggle><Knob /></Toggle>
                </ToggleRow>
                <Heading $mt={14}>Tools</Heading>
                <ToolCard>
                  <Thumb><BeeThumb /></Thumb>
                  <ToolText>
                    <ToolTitle>Create an Animation</ToolTitle>
                    <ToolDesc>Drag elements around the canvas to<br />create your own animations.</ToolDesc>
                  </ToolText>
                </ToolCard>
                <Heading $mt={15}>Basic</Heading>
                <AnimGrid $mt={8}>
                  <AnimCard><ShapesTile /><AnimArrow $left={50}><ArrowUp size={13} strokeWidth={1.5} /></AnimArrow></AnimCard>
                  <AnimCard $on><ShapesTile /><AnimArrow $left={50}><ArrowRight size={13} strokeWidth={1.5} /></AnimArrow></AnimCard>
                  <AnimCard><ShapesTile fade /></AnimCard>
                </AnimGrid>
                <AnimGrid $mt={5}>
                  <AnimName>Rise</AnimName>
                  <AnimName>Pan</AnimName>
                  <AnimName>Fade</AnimName>
                </AnimGrid>
              </Section>

              <Gray>
                <Label>Animate</Label>
                <PillRow $mt={8} $gap={7.5}>
                  <Choice $w={56}>Both</Choice>
                  <Choice $w={78} $on>On enter</Choice>
                  <Choice $w={68}>On exit</Choice>
                </PillRow>
                <Label $mt={15}>Speed <Crown /></Label>
                <Slider><SliderTrack /><SliderKnob /></Slider>
                <Label $mt={22.6}>Direction <Crown /></Label>
                <PillRow $mt={7.6} $gap={7.5}>
                  <Choice $w={58}><ArrowLeft size={17} strokeWidth={1.5} /></Choice>
                  <Choice $w={58.5} $on><ArrowRight size={17} strokeWidth={1.5} /></Choice>
                </PillRow>
              </Gray>
              <Peek><PeekCard /><PeekCard /><PeekCard /></Peek>
              <Footer><RemoveBtn>Remove animation</RemoveBtn></Footer>
            </PanelBody>
            <Scrollbar>
              <ScrollArrow />
              <ScrollThumb />
              <ScrollArrow $down />
            </Scrollbar>
          </Panel>

          <Main>
            <Ruler>
              <RulerMark />
              {rulerMarks.map(m => <RulerCell key={m} $last={m === 1900}>{m}</RulerCell>)}
            </Ruler>
            <Stage>
              <ToolbarSlot>
                <Toolbar>
                  <ToolSlot $w={60} $gap={4}><ShapeIcon />Shape</ToolSlot>
                  <BarSep $l={8} $r={8} />
                  <ToolSlot $w={22}><Swatch /></ToolSlot>
                  <ToolSlot $w={38}><StrokeLines /></ToolSlot>
                  <ToolSlot $w={20}><CornerIcon /></ToolSlot>
                  <BarSep $l={6} $r={9} />
                  <FontBox>Inter</FontBox>
                  <SizeBox><Minus size={10} strokeWidth={2} />19<Plus size={10} strokeWidth={2} /></SizeBox>
                  <ToolSlot $w={29.4} $ml={1.3}><TextColor>A<Rainbow /></TextColor></ToolSlot>
                  <ToolSlot $w={29.4}><Bold size={15} strokeWidth={2.6} /></ToolSlot>
                  <ToolSlot $w={29.4}><Italic size={15} strokeWidth={1.6} /></ToolSlot>
                  <ToolSlot $w={29.4}><Underline size={15} strokeWidth={1.6} /></ToolSlot>
                  <ToolSlot $w={29.4}><Strikethrough size={15} strokeWidth={1.6} /></ToolSlot>
                  <ToolSlot $w={29.4}><AaText>aA</AaText></ToolSlot>
                  <ToolSlot $w={29.4}><AlignCenter size={15} strokeWidth={1.6} /></ToolSlot>
                  <ToolSlot $w={29.4}><ListBars /></ToolSlot>
                  <ToolSlot $w={29.4}><SpacingIcon /></ToolSlot>
                  <BarSep $l={5} $r={0} />
                  <ToolSlot $w={36}><Checker /></ToolSlot>
                  <BarSep $l={2} $r={6} />
                  <PanChip $w={54} $gap={4}><PanIcon />Pan</PanChip>
                  <BarSep $l={5} $r={0} />
                  <ToolSlot $w={73}>Position</ToolSlot>
                  <BarSep $l={0} $r={0} />
                  <ToolSlot $w={24} $ml={5}><Roller /></ToolSlot>
                </Toolbar>
              </ToolbarSlot>
              <PageColumn>
                <PageActions><Lock /><CopyAdd /><PageAdd /></PageActions>
                <Canvas>
                  <GreenSquare />
                  <OrangeCircle />
                  <Triangle width="271" height="238" viewBox="0 0 271 238"><polygon points="135.5,0 271,238 0,238" fill="#30bdfd" /></Triangle>
                  <FloatPill><CommentPlus /><Dots /></FloatPill>
                  <Selection>
                    <RedShape />
                    <SelectFrame />
                    {handles.map(h => <Handle key={h} $at={h} />)}
                    <Caret />
                    <Cursor width="11" height="15" viewBox="0 0 11 15"><path d="M.7.7v11l2.800-2.400 1.800 4.600 2-.8-1.900-4.500h4z" fill="#fff" stroke="#7a1020" strokeWidth=".7" /></Cursor>
                  </Selection>
                  <RotateBtn><SwapIcon /></RotateBtn>
                </Canvas>
                <AddPage>+ Add page</AddPage>
              </PageColumn>
            </Stage>
            <BottomBar>
              <BarItem $w={78}><NotesIcon />Notes</BarItem>
              <BarItem $w={60}><TimerIcon />Timer</BarItem>
              <BarRight>
                <PageLabel>Page 1 / 1</PageLabel>
                <ZoomTrack><ZoomKnob /></ZoomTrack>
                <Percent>61%</Percent>
                <BarIcon $ml={17.5}><LayoutIcon /></BarIcon>
                <BarIcon><GridIcon /></BarIcon>
                <BarIcon><Maximize2 size={15} strokeWidth={1.4} /></BarIcon>
                <BarIcon><CircleHelp size={17} strokeWidth={1.3} /></BarIcon>
              </BarRight>
            </BottomBar>
          </Main>
        </Workspace>

        <Taskbar>
          <TaskSlot $w={39} $plain><Win /></TaskSlot>
          <TaskSlot $ml={6}><Explorer /></TaskSlot>
          <TaskSlot $ml={7}><ChromeLogo badge /></TaskSlot>
          <TaskSlot $ml={7}><RingLogo /></TaskSlot>
          <TaskSlot $ml={4} $w={39} $on><ChromeLogo /></TaskSlot>
          <TaskSlot $ml={4}><ObsLogo /></TaskSlot>
          <Tray>
            <Net>
              <span>U:</span><span>3 kB/s</span>
              <span>D:</span><span>0 kB/s</span>
            </Net>
            <TraySlot $w={17} $ml={5}><ChevronUp size={14} strokeWidth={1.5} /></TraySlot>
            <TraySlot $w={20}><Mic size={15} strokeWidth={1.6} /></TraySlot>
            <TraySlot $w={20}><BlueApp /></TraySlot>
            <TraySlot $w={20}><TrayFlag /></TraySlot>
            <TraySlot $w={20}><Wifi size={14} strokeWidth={1.4} /></TraySlot>
            <TraySlot $w={18}><Volume2 size={14} strokeWidth={1.4} /></TraySlot>
            <TraySlot $w={30}>ENG</TraySlot>
            <TraySlot $w={57}><span>16:38</span><span>26/09/2024</span></TraySlot>
            <TraySlot $w={34}><Notify /></TraySlot>
          </Tray>
        </Taskbar>
      </Window>
    </>
  );
}
